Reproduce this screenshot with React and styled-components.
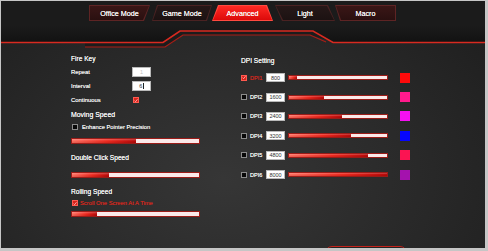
import React from 'react';
import styled, { createGlobalStyle } from 'styled-components';

const Global = createGlobalStyle`
  html, body { margin: 0; padding: 0; background: #c6c6c6; }
  body { font-family: "Liberation Sans", Arial, sans-serif; }
  * { box-sizing: border-box; }
`;

const Frame = styled.div`
  margin: 1px 0 0 1px;
  width: 484px;
  height: 247px;
  overflow: hidden;
  display: flex;
  flex-direction: column;
  background: radial-gradient(ellipse 70% 95% at 46% 72%, #363636 0%, #2c2c2c 45%, #1f1f1f 100%);
`;

const Header = styled.header`
  flex: none;
  display: flex;
  flex-direction: column;
`;

const TabBar = styled.nav`
  display: flex;
  height: 25px;
  padding: 4px 0 5px 88px;
  background: #1b1b1b;
`;

const Tab = styled.button`
  position: relative;
  flex: none;
  width: ${p => p.$w}px;
  height: 16px;
  margin-left: ${p => p.$ml}px;
  padding: 0;
  border: none;
  cursor: pointer;
  clip-path: ${p => p.$clip};
  background: ${p => (p.$active ? '#ff4a40' : p.$warm ? '#5e2424' : '#4a2222')};
  font-family: "Liberation Sans", Arial, sans-serif;
  font-size: 7.2px;
  color: #f6f6f6;
  display: flex;
  align-items: center;
  justify-content: center;
  &::before {
    content: '';
    position: absolute;
    inset: 1px;
    clip-path: ${p => p.$clip};
    background: ${p =>
      p.$active
        ? 'linear-gradient(#ff2a24, #dc0a0a)'
        : p.$warm
        ? 'linear-gradient(#3a1616, #2a1010)'
        : 'linear-gradient(#261818, #1c1212)'};
  }
  span { position: relative; text-shadow: 0 0 0.4px #fff; }
`;

const Deco = styled.svg`
  display: block;
  flex: none;
`;

const Body = styled.main`
  flex: none;
  height: 197px;
  display: flex;
`;

const LeftCol = styled.section`
  width: 240px;
  padding: 4px 0 0 70px;
  display: flex;
  flex-direction: column;
`;

const RightCol = styled.section`
  flex: 1;
  padding-top: 5px;
  display: flex;
  flex-direction: column;
`;

const Heading = styled.div`
  height: ${p => p.$h || 12}px;
  line-height: ${p => p.$h || 12}px;
  margin-top: ${p => p.$mt || 0}px;
  font-size: ${p => p.$size || 6.6}px;
  color: #f2f2f2;
  text-shadow: 0 0 0.4px #fff;
  white-space: nowrap;
`;

const FieldRow = styled.div`
  display: flex;
  align-items: center;
  height: ${p => p.$h || 14}px;
`;

const Label = styled.span`
  width: 61px;
  flex: none;
  font-size: 5.9px;
  color: #ececec;
  text-shadow: 0 0 0.3px #fff;
`;

const Field = styled.span`
  width: 19px;
  height: ${p => p.$h || 10}px;
  flex: none;
  background: #fff;
  border: 1px solid #b9b9b9;
  display: flex;
  align-items: center;
  justify-content: center;
  font-size: 5.5px;
  color: ${p => (p.$faint ? '#c4c4c4' : '#333')};
`;

const Caret = styled.i`
  display: inline-block;
  width: 0.6px;
  height: 6px;
  margin-left: 1px;
  background: #222;
`;

const Box = styled.span`
  width: 6px;
  height: 6px;
  flex: none;
  margin-left: ${p => p.$ml || 0}px;
  margin-right: ${p => p.$mr || 0}px;
  border: 1px solid ${p => (p.$on ? '#ff5a50' : '#8c8c8c')};
  background: ${p => (p.$on ? '#d8221a' : '#080808')};
  display: flex;
  align-items: center;
  justify-content: center;
  svg { display: block; }
`;

const OptionText = styled.span`
  font-size: 5.8px;
  color: ${p => (p.$red ? '#cc281f' : '#ececec')};
  text-shadow: 0 0 0.3px ${p => (p.$red ? '#cc281f' : '#fff')};
  white-space: nowrap;
`;

const Track = styled.div`
  width: ${p => p.$w}px;
  height: ${p => p.$h || 6}px;
  flex: none;
  margin-top: ${p => p.$mt || 0}px;
  margin-left: ${p => p.$ml || 0}px;
  margin-right: ${p => p.$mr || 0}px;
  border: 1px solid #9a1c18;
  background: #fbe9e9;
  display: flex;
`;

const Fill = styled.div`
  width: ${p => p.$v}%;
  height: 100%;
  background:
    linear-gradient(rgba(255, 255, 255, 0.25), rgba(255, 255, 255, 0) 50%, rgba(0, 0, 0, 0.12)),
    linear-gradient(90deg, #ff6e60 0%, #ee2a20 55%, #b80a0a 100%);
`;

const DpiRow = styled.div`
  display: flex;
  align-items: center;
  height: 19.4px;
`;

const DpiLabel = styled.span`
  width: 16px;
  flex: none;
  font-size: 5.6px;
  color: ${p => (p.$on ? '#cc281f' : '#ececec')};
  text-shadow: 0 0 0.3px ${p => (p.$on ? '#cc281f' : '#fff')};
`;

const Swatch = styled.span`
  width: 10px;
  height: 10px;
  flex: none;
  background: ${p => p.$c};
`;

const Footer = styled.footer`
  flex: none;
  padding-left: 324px;
`;

const FooterButton = styled.button`
  width: 82px;
  height: 22px;
  border: 1.5px solid #c4221a;
  border-radius: 7px;
  background: #232323;
`;

const Check = () => (
  <svg width="5" height="5" viewBox="0 0 10 10">
    <path d="M1.5 5.2 L4 8 L8.8 1.8" stroke="#ffd2d2" strokeWidth="1.8" fill="none" />
  </svg>
);

const tabs = [
  { label: 'Office Mode', w: 61, ml: 0, warm: true, clip: 'polygon(0 0,100% 0,calc(100% - 6px) 100%,0 100%)' },
  { label: 'Game Mode', w: 60, ml: 2, clip: 'polygon(5px 0,100% 0,calc(100% - 5px) 100%,0 100%)' },
  { label: 'Advanced', w: 61, ml: 0, active: true, clip: 'polygon(6px 0,calc(100% - 6px) 0,100% 100%,0 100%)' },
  { label: 'Light', w: 60, ml: 2, clip: 'polygon(0 0,calc(100% - 7px) 0,100% 100%,7px 100%)' },
  { label: 'Macro', w: 61, ml: 0, warm: true, clip: 'polygon(0 0,100% 0,100% 100%,5px 100%)' },
];

const dpis = [
  { n: 1, v: 800, f: 8, c: '#fe0a0a', on: true },
  { n: 2, v: 1600, f: 36, c: '#ff1a8c' },
  { n: 3, v: 2400, f: 54, c: '#f510f2' },
  { n: 4, v: 3200, f: 63, c: '#0606fe' },
  { n: 5, v: 4800, f: 81, c: '#fb1452' },
  { n: 6, v: 8000, f: 100, c: '#a412ae' },
];

export default function App() {
  return (
    <>
      <Global />
      <Frame>
        <Header>
          <TabBar>
            {tabs.map(t => (
              <Tab key={t.label} $w={t.w} $ml={t.ml} $clip={t.clip} $active={t.active} $warm={t.warm}>
                <span>{t.label}</span>
              </Tab>
            ))}
          </TabBar>
          <Deco width="484" height="23" viewBox="0 0 484 23">
            <defs>
              <linearGradient id="hd" x1="0" y1="0" x2="0" y2="1">
                <stop offset="0" stopColor="#1b1b1b" />
                <stop offset="1" stopColor="#121212" />
              </linearGradient>
            </defs>
            <path d="M0 0H484V16H332L312 5H179L162 16H0Z" fill="url(#hd)" />
            <path d="M84 16.5H162L179 5H312L326 14L309 9H182L164 21H84Z" fill="#1c1c1c" />
            <polyline
              points="0,16.5 162,16.5 179,5 312,5 332,16.5 484,16.5"
              stroke="#d82a20"
              strokeWidth="1.6"
              fill="none"
            />
            <polyline
              points="84,21 164,21 182,9 309,9 325,16"
              stroke="#a81d16"
              strokeWidth="1.2"
              fill="none"
            />
          </Deco>
        </Header>
        <Body>
          <LeftCol>
            <Heading>Fire Key</Heading>
            <FieldRow>
              <Label>Repeat</Label>
              <Field $faint>1</Field>
            </FieldRow>
            <FieldRow>
              <Label>Interval</Label>
              <Field>
                6<Caret />
              </Field>
            </FieldRow>
            <FieldRow>
              <Label>Continuous</Label>
              <Box $on $ml={1}>
                <Check />
              </Box>
            </FieldRow>
            <Heading $h={15} $size={6.9}>Moving Speed</Heading>
            <FieldRow $h={10}>
              <Box $ml={1} $mr={4} />
              <OptionText>Enhance Pointer Precision</OptionText>
            </FieldRow>
            <Track $w={129} $mt={6}>
              <Fill $v={50} />
            </Track>
            <Heading $mt={8}>Double Click Speed</Heading>
            <Track $w={129} $mt={8}>
              <Fill $v={29.5} />
            </Track>
            <Heading $mt={8}>Rolling Speed</Heading>
            <FieldRow $h={10}>
              <Box $on $ml={1} $mr={2}>
                <Check />
              </Box>
              <OptionText $red>Scroll One Screen At A Time</OptionText>
            </FieldRow>
            <Track $w={129} $mt={3}>
              <Fill $v={20} />
            </Track>
          </LeftCol>
          <RightCol>
            <Heading $h={14}>DPI Setting</Heading>
            {dpis.map(d => (
              <DpiRow key={d.n}>
                <Box $on={d.on} $mr={3}>{d.on && <Check />}</Box>
                <DpiLabel $on={d.on}>DPI{d.n}</DpiLabel>
                <Field $h={9}>{d.v}</Field>
                <Track $w={100} $h={5} $ml={3} $mr={12}>
                  <Fill $v={d.f} />
                </Track>
                <Swatch $c={d.c} />
              </DpiRow>
            ))}
          </RightCol>
        </Body>
        <Footer>
          <FooterButton aria-label="Apply" />
        </Footer>
      </Frame>
    </>
  );
}
